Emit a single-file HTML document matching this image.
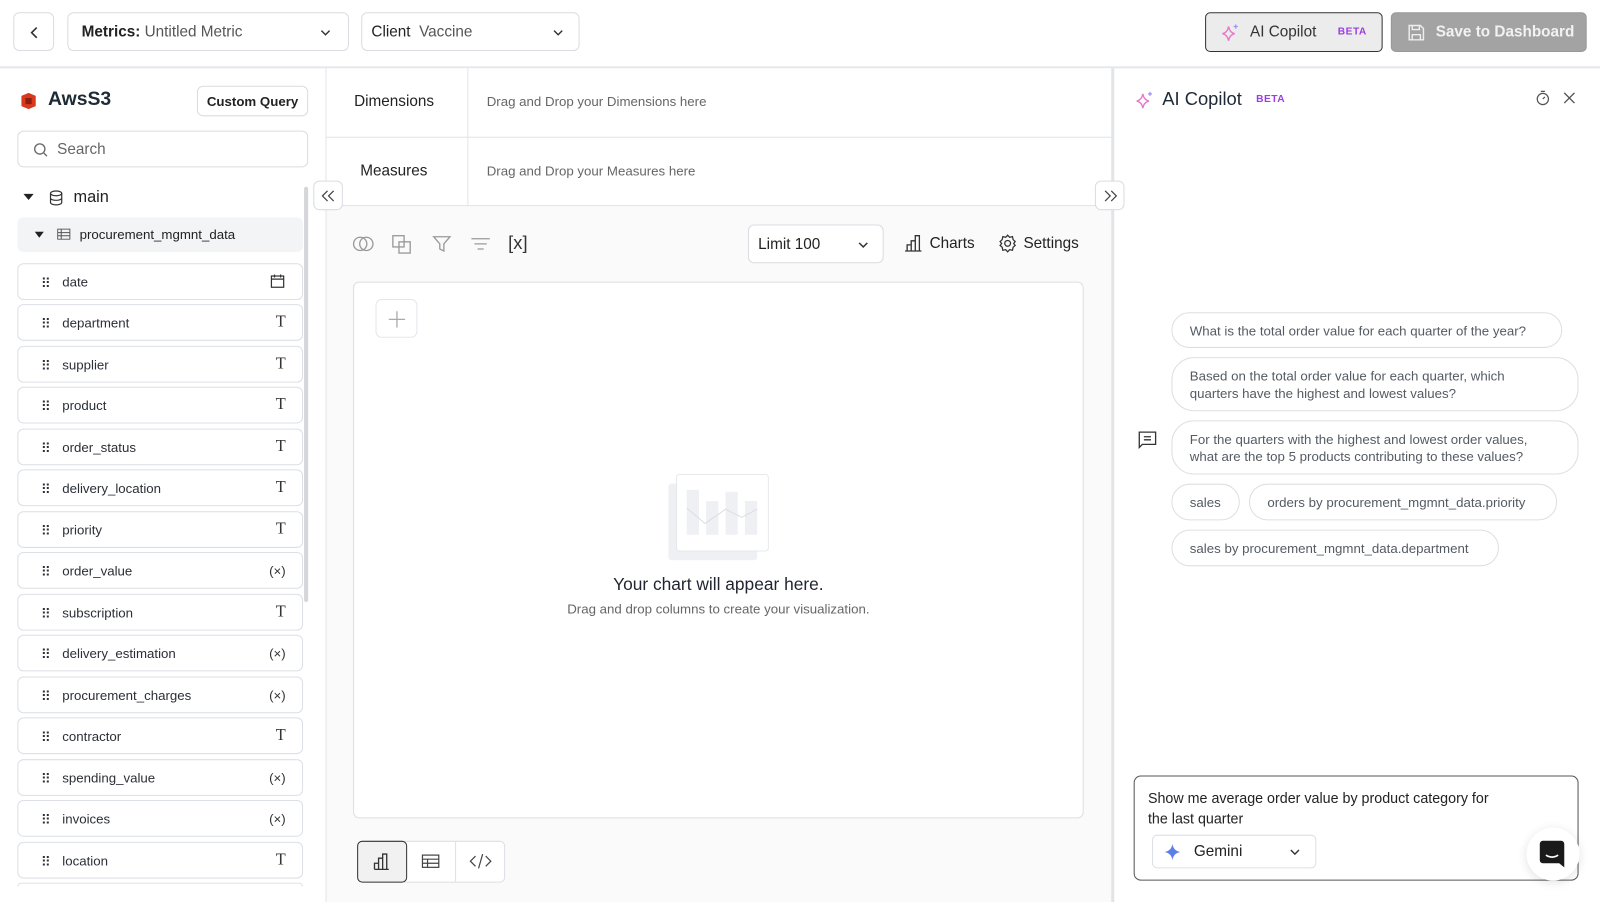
<!DOCTYPE html>
<html><head><meta charset="utf-8"><style>
*{box-sizing:border-box;margin:0;padding:0}
html,body{width:1600px;height:902px;overflow:hidden;background:#fff}
body{font-family:"Liberation Sans",sans-serif;color:#1f2937;position:relative}
#w{position:absolute;left:0;top:0;width:1568px;height:884px;transform:scale(1.0204);transform-origin:0 0}
.a{position:absolute}
.box{position:absolute;border:1px solid #d9dce1;border-radius:6px;background:#fff}
.fld{position:absolute;left:17px;width:280px;height:36px;border:1px solid #dcdfe4;border-radius:6px;background:#fff;font-size:13px;color:#2b2f36}
.fld .n{position:absolute;left:43px;top:10px}
.fld .d{position:absolute;left:22px;top:11px}
.fld .t{position:absolute;right:16px;top:8px;font-family:"Liberation Serif",serif;font-size:16px;color:#333}
.chip{position:absolute;border:1px solid #dcdfe4;border-radius:22px;background:#fff;font-size:13px;color:#555b63;padding:0 17px;line-height:17px;white-space:nowrap}
</style></head><body><div id="w">
<!-- top bar -->
<div class="box" style="left:13px;top:12px;width:40px;height:38px"><svg class="a" style="left:14px;top:12px" width="12" height="14" viewBox="0 0 12 14"><path d="M8 2 L3 7 L8 12" fill="none" stroke="#333" stroke-width="1.6"/></svg></div>
<div class="box" style="left:66px;top:12px;width:276px;height:38px;font-size:15px;padding:10px 13px"><b style="font-weight:600;color:#222">Metrics:</b> <span style="color:#555">Untitled Metric</span><svg class="a" style="left:246px;top:14px" width="12" height="10"><path d="M2 3 L6 7 L10 3" fill="none" stroke="#333" stroke-width="1.4"/></svg></div>
<div class="box" style="left:354px;top:12px;width:214px;height:38px;font-size:15px;padding:10px 9px"><span style="color:#222">Client</span>&nbsp; <span style="color:#555">Vaccine</span><svg class="a" style="left:186px;top:14px" width="12" height="10"><path d="M2 3 L6 7 L10 3" fill="none" stroke="#333" stroke-width="1.4"/></svg></div>
<div class="a" style="left:1181px;top:12px;width:174px;height:39px;border:1px solid #333;border-radius:5px;background:#ececec;font-size:15px;color:#333">
<svg class="a" style="left:14px;top:9px" width="22" height="20" viewBox="0 0 22 20"><path d="M8 4 Q9 10 14 11 Q9 12 8 18 Q7 12 2 11 Q7 10 8 4Z" fill="none" stroke="#e879c9" stroke-width="1.4"/><path d="M15 2v4M13 4h4" stroke="#a78bfa" stroke-width="1.2"/></svg>
<span class="a" style="left:43px;top:10px">AI Copilot</span><span class="a" style="left:129px;top:13px;font-size:10px;font-weight:bold;color:#9b3fe0;letter-spacing:.5px">BETA</span></div>
<div class="a" style="left:1363px;top:12px;width:192px;height:39px;border-radius:5px;background:#a3a3a3;border:1px solid #999;color:#f2f2f2;font-size:15px;font-weight:600">
<svg class="a" style="left:15px;top:10px" width="18" height="18" viewBox="0 0 18 18"><path d="M2 2h11l3 3v11H2z M5 2v4h7V2 M5 16v-5h8v5" fill="none" stroke="#eee" stroke-width="1.4"/></svg>
<span class="a" style="left:43px;top:10px">Save to Dashboard</span></div>
<div class="a" style="left:0;top:65px;width:1600px;height:2px;background:#e5e7eb"></div>

<!-- left panel -->
<div class="a" style="left:319px;top:67px;width:1px;height:835px;background:#e2e4e8"></div>
<svg class="a" style="left:19px;top:89px" width="18" height="20" viewBox="0 0 18 20"><path d="M2 5 L9 2 L16 5 V15 L9 18 L2 15Z" fill="#d9381e"/><path d="M6 7h6v6H6z" fill="#8c1d0f"/></svg>
<div class="a" style="left:47px;top:87px;font-size:19px;font-weight:600;color:#1f2a37">AwsS3</div>
<div class="box" style="left:193px;top:84px;width:109px;height:30px;font-size:13px;font-weight:600;padding:7px 0;text-align:center;white-space:nowrap;color:#222">Custom Query</div>
<div class="box" style="left:17px;top:128px;width:285px;height:36px;font-size:15px;color:#666;padding:9px 38px"><svg class="a" style="left:14px;top:10px" width="16" height="16"><circle cx="7" cy="7" r="5" fill="none" stroke="#666" stroke-width="1.3"/><path d="M11 11l3 3" stroke="#666" stroke-width="1.3"/></svg>Search</div>
<svg class="a" style="left:22px;top:189px" width="12" height="8"><path d="M1 1h10L6 7z" fill="#222"/></svg>
<svg class="a" style="left:48px;top:186px" width="14" height="16" viewBox="0 0 14 16"><ellipse cx="7" cy="3.5" rx="5.5" ry="2.3" fill="none" stroke="#333" stroke-width="1.2"/><path d="M1.5 3.5v9c0 1.3 2.5 2.3 5.5 2.3s5.5-1 5.5-2.3v-9M1.5 8c0 1.3 2.5 2.3 5.5 2.3S12.5 9.3 12.5 8" fill="none" stroke="#333" stroke-width="1.2"/></svg>
<div class="a" style="left:72px;top:185px;font-size:16px;color:#222">main</div>
<div class="a" style="left:17px;top:213px;width:280px;height:34px;background:#f3f4f6;border-radius:6px"></div>
<svg class="a" style="left:34px;top:227px" width="9" height="6"><path d="M0 0h9L4.5 6z" fill="#222"/></svg>
<svg class="a" style="left:56px;top:224px" width="13" height="11"><rect x=".5" y=".5" width="12" height="10" fill="none" stroke="#555"/><path d="M.5 4h12M.5 7h12M4 .5v10" stroke="#555"/></svg>
<div class="a" style="left:78px;top:222px;font-size:13px;color:#222">procurement_mgmnt_data</div>
<div class="a" style="left:298px;top:183px;width:4px;height:407px;background:#d4d6da;border-radius:2px"></div>

<div class="fld" style="top:258px"><span class="d">⠿</span><span class="n">date</span><svg class="a" style="right:17px;top:9px" width="14" height="15"><rect x="1" y="2.5" width="12" height="11" fill="none" stroke="#333" stroke-width="1.2"/><path d="M1 5.5h12M4 1v3M10 1v3" stroke="#333" stroke-width="1.2"/></svg></div>
<div class="fld" style="top:298px"><span class="d">⠿</span><span class="n">department</span><span class="t">T</span></div>
<div class="fld" style="top:339px"><span class="d">⠿</span><span class="n">supplier</span><span class="t">T</span></div>
<div class="fld" style="top:379px"><span class="d">⠿</span><span class="n">product</span><span class="t">T</span></div>
<div class="fld" style="top:420px"><span class="d">⠿</span><span class="n">order_status</span><span class="t">T</span></div>
<div class="fld" style="top:460px"><span class="d">⠿</span><span class="n">delivery_location</span><span class="t">T</span></div>
<div class="fld" style="top:501px"><span class="d">⠿</span><span class="n">priority</span><span class="t">T</span></div>
<div class="fld" style="top:541px"><span class="d">⠿</span><span class="n">order_value</span><span class="t" style="font-family:'Liberation Sans';font-size:13px;top:10px">(×)</span></div>
<div class="fld" style="top:582px"><span class="d">⠿</span><span class="n">subscription</span><span class="t">T</span></div>
<div class="fld" style="top:622px"><span class="d">⠿</span><span class="n">delivery_estimation</span><span class="t" style="font-family:'Liberation Sans';font-size:13px;top:10px">(×)</span></div>
<div class="fld" style="top:663px"><span class="d">⠿</span><span class="n">procurement_charges</span><span class="t" style="font-family:'Liberation Sans';font-size:13px;top:10px">(×)</span></div>
<div class="fld" style="top:703px"><span class="d">⠿</span><span class="n">contractor</span><span class="t">T</span></div>
<div class="fld" style="top:744px"><span class="d">⠿</span><span class="n">spending_value</span><span class="t" style="font-family:'Liberation Sans';font-size:13px;top:10px">(×)</span></div>
<div class="fld" style="top:784px"><span class="d">⠿</span><span class="n">invoices</span><span class="t" style="font-family:'Liberation Sans';font-size:13px;top:10px">(×)</span></div>
<div class="fld" style="top:825px"><span class="d">⠿</span><span class="n">location</span><span class="t">T</span></div>
<div class="a" style="left:17px;top:865px;width:280px;height:4px;border:1px solid #dcdfe4;border-bottom:none;border-radius:6px 6px 0 0"></div>

<!-- middle -->
<div class="a" style="left:320px;top:67px;width:769px;height:835px;background:#fafafa"></div>
<div class="a" style="left:320px;top:67px;width:769px;height:135px;background:#fff;border-bottom:1px solid #e2e4e8"></div>
<div class="a" style="left:320px;top:134px;width:769px;height:1px;background:#e2e4e8"></div>
<div class="a" style="left:458px;top:67px;width:1px;height:135px;background:#e2e4e8"></div>
<div class="a" style="left:347px;top:91px;font-size:15px;color:#222">Dimensions</div>
<div class="a" style="left:353px;top:159px;font-size:15px;color:#222">Measures</div>
<div class="a" style="left:477px;top:92px;font-size:13px;color:#666">Drag and Drop your Dimensions here</div>
<div class="a" style="left:477px;top:160px;font-size:13px;color:#666">Drag and Drop your Measures here</div>
<div class="box" style="left:307px;top:177px;width:29px;height:29px"><svg class="a" style="left:6px;top:7px" width="16" height="14"><path d="M7 2L2 7l5 5M13 2L8 7l5 5" fill="none" stroke="#444" stroke-width="1.2"/></svg></div>
<div class="box" style="left:1073px;top:177px;width:29px;height:29px;z-index:2"><svg class="a" style="left:6px;top:7px" width="16" height="14"><path d="M3 2l5 5-5 5M9 2l5 5-5 5" fill="none" stroke="#444" stroke-width="1.2"/></svg></div>
<div class="a" style="left:1089px;top:67px;width:3px;height:835px;background:#e2e4e8"></div>

<svg class="a" style="left:345px;top:229px" width="190" height="20" viewBox="0 0 190 20">
<circle cx="8" cy="10" r="6.5" fill="none" stroke="#999" stroke-width="1.3"/><circle cx="14" cy="10" r="6.5" fill="none" stroke="#999" stroke-width="1.3"/>
<rect x="40" y="2" width="11" height="11" fill="none" stroke="#999" stroke-width="1.3"/><rect x="46" y="8" width="11" height="11" fill="none" stroke="#999" stroke-width="1.3"/>
<path d="M80 3h16l-6 7v7l-4-2v-5z" fill="none" stroke="#999" stroke-width="1.3"/>
<path d="M117 5h18M120 10h12M123 15h6" stroke="#999" stroke-width="1.3"/>
</svg>
<div class="a" style="left:498px;top:228px;font-size:18px;color:#333">[x]</div>
<div class="box" style="left:733px;top:220px;width:133px;height:38px;font-size:15px;padding:10px 9px;color:#222">Limit 100<svg class="a" style="left:106px;top:14px" width="12" height="10"><path d="M2 3 L6 7 L10 3" fill="none" stroke="#333" stroke-width="1.4"/></svg></div>
<svg class="a" style="left:886px;top:229px" width="18" height="18"><path d="M1 17h16M3 17v-6h4v6M7 17V7h4v10M11 17V2h4v15" fill="none" stroke="#333" stroke-width="1.3"/></svg>
<div class="a" style="left:911px;top:230px;font-size:15px;color:#222">Charts</div>
<svg class="a" style="left:978px;top:229px" width="19" height="19" viewBox="0 0 20 20"><circle cx="10" cy="10" r="3" fill="none" stroke="#333" stroke-width="1.3"/><path d="M10 1.5l2 2.2 3-.6.6 3 2.2 2-1.6 2 1.6 2-2.2 2-.6 3-3-.6-2 2.2-2-2.2-3 .6-.6-3-2.2-2 1.6-2-1.6-2 2.2-2 .6-3 3 .6z" fill="none" stroke="#333" stroke-width="1.3"/></svg>
<div class="a" style="left:1003px;top:230px;font-size:15px;color:#222">Settings</div>

<div class="a" style="left:346px;top:276px;width:716px;height:526px;background:#fff;border:1px solid #dcdfe4;border-radius:6px"></div>
<div class="box" style="left:368px;top:293px;width:41px;height:38px;border-color:#e5e7eb"><svg class="a" style="left:11px;top:10px" width="18" height="18"><path d="M9 1v16M1 9h16" stroke="#aaa" stroke-width="1.3"/></svg></div>
<svg class="a" style="left:654px;top:464px" width="100" height="86" viewBox="0 0 100 86">
<rect x="1" y="10" width="87" height="75" rx="3" fill="#eef0f4"/>
<rect x="9" y="1" width="90" height="75" rx="3" fill="#fff" stroke="#e6e8ec"/>
<rect x="19" y="16" width="12" height="44" fill="#eef0f4"/><rect x="38" y="27" width="12" height="33" fill="#eef0f4"/><rect x="57" y="18" width="12" height="42" fill="#eef0f4"/><rect x="76" y="27" width="12" height="33" fill="#eef0f4"/>
<path d="M19 34l18 15 20-14 16 8 15-8" fill="none" stroke="#dadde3"/>
</svg>
<div class="a" style="left:346px;top:563px;width:716px;text-align:center;font-size:17px;color:#1f2430">Your chart will appear here.</div>
<div class="a" style="left:346px;top:589px;width:716px;text-align:center;font-size:13px;color:#666">Drag and drop columns to create your visualization.</div>

<div class="a" style="left:350px;top:824px;width:145px;height:41px;border:1px solid #dcdfe4;border-radius:5px;background:#fff"></div>
<div class="a" style="left:350px;top:824px;width:49px;height:41px;border:1px solid #333;border-radius:5px;background:#f1f1f1"></div>
<div class="a" style="left:446px;top:825px;width:1px;height:39px;background:#dcdfe4"></div>
<svg class="a" style="left:365px;top:835px" width="18" height="18"><path d="M2 17h14M2 17v-6h4v6M6 17V6h4v11M10 17V2h4v15" fill="none" stroke="#333" stroke-width="1.3"/></svg>
<svg class="a" style="left:413px;top:837px" width="18" height="14"><rect x="1" y="1" width="16" height="12" fill="none" stroke="#444" stroke-width="1.2"/><path d="M1 5h16M1 9h16M6 5v8" stroke="#444" stroke-width="1.2"/></svg>
<svg class="a" style="left:460px;top:836px" width="22" height="16"><path d="M6 3L1 8l5 5M16 3l5 5-5 5M13 1L9 15" fill="none" stroke="#444" stroke-width="1.2"/></svg>

<!-- right panel -->
<svg class="a" style="left:1112px;top:88px" width="22" height="20" viewBox="0 0 22 20"><path d="M8 4 Q9 10 14 11 Q9 12 8 18 Q7 12 2 11 Q7 10 8 4Z" fill="none" stroke="#e879c9" stroke-width="1.4"/><path d="M15 2v4M13 4h4" stroke="#a78bfa" stroke-width="1.2"/></svg>
<div class="a" style="left:1139px;top:87px;font-size:18px;color:#1f2a37">AI Copilot</div>
<div class="a" style="left:1231px;top:92px;font-size:10px;font-weight:bold;color:#9b3fe0;letter-spacing:.5px">BETA</div>
<svg class="a" style="left:1504px;top:88px" width="16" height="16"><circle cx="8" cy="9" r="5.5" fill="none" stroke="#555" stroke-width="1.2"/><path d="M6 1.5h4M8 9l2-2" stroke="#555" stroke-width="1.2"/></svg>
<svg class="a" style="left:1531px;top:89px" width="14" height="14"><path d="M2 2l10 10M12 2L2 12" stroke="#555" stroke-width="1.3"/></svg>

<svg class="a" style="left:1115px;top:422px" width="19" height="18"><path d="M1.5 1.5h16v12h-13l-3 3z" fill="none" stroke="#333" stroke-width="1.3"/><path d="M6 6h7M6 9h7" stroke="#333" stroke-width="1.3"/></svg>
<div class="chip" style="left:1148px;top:306px;width:383px;height:35px;padding-top:9px">What is the total order value for each quarter of the year?</div>
<div class="chip" style="left:1148px;top:350px;width:399px;height:53px;padding-top:9px">Based on the total order value for each quarter, which<br>quarters have the highest and lowest values?</div>
<div class="chip" style="left:1148px;top:412px;width:399px;height:53px;padding-top:9px">For the quarters with the highest and lowest order values,<br>what are the top 5 products contributing to these values?</div>
<div class="chip" style="left:1148px;top:474px;width:67px;height:36px;padding-top:9px">sales</div>
<div class="chip" style="left:1224px;top:474px;width:302px;height:36px;padding-top:9px">orders by procurement_mgmnt_data.priority</div>
<div class="chip" style="left:1148px;top:519px;width:321px;height:36px;padding-top:9px">sales by procurement_mgmnt_data.department</div>

<div class="a" style="left:1111px;top:760px;width:436px;height:103px;border:1px solid #555;border-radius:7px;background:#fff"></div>
<div class="a" style="left:1125px;top:773px;width:400px;font-size:14px;line-height:19.5px;color:#222">Show me average order value by product category for<br>the last quarter</div>
<div class="a" style="left:1129px;top:818px;width:161px;height:33px;border:1px solid #dcdfe4;border-radius:5px;background:#fff">
<svg class="a" style="left:11px;top:8px" width="16" height="16"><path d="M8 0Q9 7 16 8Q9 9 8 16Q7 9 0 8Q7 7 8 0Z" fill="#5b7ee8"/></svg>
<span class="a" style="left:40px;top:7px;font-size:15px;color:#222">Gemini</span>
<svg class="a" style="left:133px;top:11px" width="12" height="10"><path d="M2 3 L6 7 L10 3" fill="none" stroke="#333" stroke-width="1.4"/></svg></div>
<div class="a" style="left:1496px;top:811px;width:52px;height:52px;border-radius:50%;background:#fff;box-shadow:0 2px 10px rgba(0,0,0,.12)"></div>
<svg class="a" style="left:1508px;top:823px" width="26" height="28" viewBox="0 0 26 28"><path d="M4 1h18a3 3 0 0 1 3 3v23l-5-4H4a3 3 0 0 1-3-3V4a3 3 0 0 1 3-3z" fill="#1a1a1a"/><path d="M7 15q6 4 12 0" fill="none" stroke="#fff" stroke-width="1.6"/></svg>
</div></body></html>
